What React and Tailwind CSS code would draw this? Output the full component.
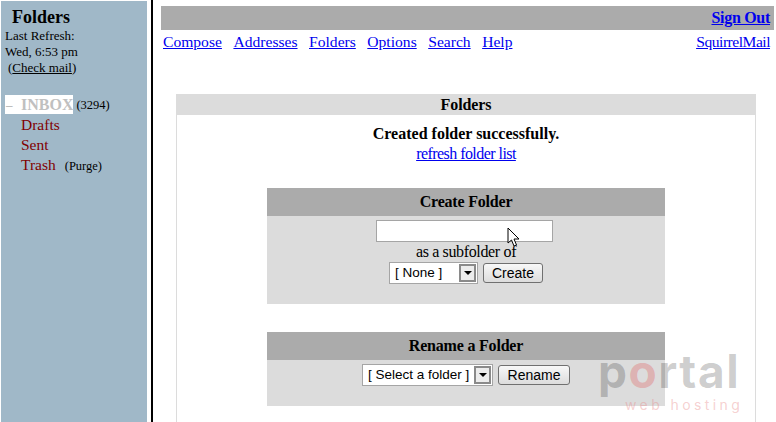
import React from 'react';

const serif = { fontFamily: '"Liberation Serif", serif' };

function Select({ label, width }) {
    return (
        <div className={`flex items-center justify-between h-[22px] bg-white border border-[#a5a5a5] pl-[5px] pr-[1px] text-[13.5px] text-black font-['Liberation_Sans',sans-serif] ${width}`}>
            <span className="whitespace-nowrap">{label}</span>
            <span className="flex items-center justify-center w-[17px] h-[18px] border-2 border-[#8a8a8a] bg-[#ececec]">
                <span className="w-0 h-0 border-l-[4px] border-r-[4px] border-t-[4px] border-l-transparent border-r-transparent border-t-black" />
            </span>
        </div>
    );
}

function Button({ children, width }) {
    return (
        <button className={`h-[20px] rounded-[3px] border border-[#707070] bg-gradient-to-b from-[#f8f8f8] to-[#dcdcdc] text-[14px] leading-none text-black font-['Liberation_Sans',sans-serif] ${width}`}>
            {children}
        </button>
    );
}

function Cursor() {
    return (
        <svg className="absolute left-[507px] top-[227px]" width="14" height="21" viewBox="0 0 14 21">
            <path d="M1 1 L1 16 L4.5 13 L7 19 L9.5 18 L7 12 L12 12 Z" fill="#ffffff" stroke="#000000" strokeWidth="1" />
        </svg>
    );
}

export default function App() {
    return (
        <div className="relative w-[776px] h-[422px] overflow-hidden bg-white flex text-black" style={serif}>
            <aside className="ml-[1px] mt-[1px] w-[146px] h-[421px] shrink-0 bg-[#a0b8c8]">
                <div className="pl-[11px] pt-[6px] text-[18px] leading-[20px] font-bold">Folders</div>
                <div className="pl-[4px] pt-[1px] text-[13px] leading-[16px]">
                    <div>Last Refresh:</div>
                    <div>Wed, 6:53 pm</div>
                    <div className="pl-[3px]">(<span className="underline">Check mail</span>)</div>
                </div>
                <div className="mt-[19px] text-[15.5px] leading-[20px] text-[#800000]">
                    <div className="flex items-center h-[19px] pl-[4px]">
                        <span className="flex items-center w-[16px] h-[19px] bg-white text-[#a0a0a0] text-[13px] pl-[1px]">–</span>
                        <span className="bg-white h-[19px] font-bold text-[16px] text-[#c0c0c0] leading-[19px]">INBOX</span>
                        <span className="ml-[3px] text-[12.5px] text-black">(3294)</span>
                    </div>
                    <div className="pl-[20px] mt-[1px]">Drafts</div>
                    <div className="pl-[20px]">Sent</div>
                    <div className="pl-[20px]">Trash<span className="ml-[9px] text-[12.5px] text-black">(Purge)</span></div>
                </div>
            </aside>
            <div className="ml-[4px] w-[2px] h-full shrink-0 bg-black" />
            <main className="flex-1 pl-[8px] pr-[2px] pt-[6px] min-w-0">
                <div className="h-[24px] bg-[#ababab] text-right pr-[4px] text-[16px] leading-[23px] font-bold tracking-[-0.3px]">
                    <a className="underline text-[#0000ee]">Sign Out</a>
                </div>
                <div className="flex justify-between pl-[2px] pr-[4px] text-[15.6px] leading-[24px] text-[#0000ee] underline">
                    <div className="flex gap-[11.5px]">
                        <a>Compose</a>
                        <a>Addresses</a>
                        <a>Folders</a>
                        <a>Options</a>
                        <a>Search</a>
                        <a>Help</a>
                    </div>
                    <a className="tracking-[-0.5px]">SquirrelMail</a>
                </div>
                <section className="ml-[15px] mr-[15px] mt-[40px] w-[580px] h-[400px] border-x border-[#dcdcdc] text-center">
                    <div className="h-[21px] -mx-[1px] bg-[#dcdcdc] font-bold text-[16px] tracking-[-0.1px] leading-[21px]">Folders</div>
                    <div className="pt-[9px] font-bold text-[16px] leading-[20px]">Created folder successfully.</div>
                    <div className="text-[16px] leading-[20px] text-[#0000ee] underline tracking-[-0.55px]">refresh folder list</div>
                    <div className="mx-[90px] mt-[24px] w-[398px]">
                        <div className="h-[28px] bg-[#ababab] font-bold text-[16px] tracking-[-0.2px] leading-[27px]">Create Folder</div>
                        <div className="h-[88px] bg-[#dcdcdc] flex flex-col items-center pt-[4px]">
                            <input className="w-[177px] h-[22px] mr-[4px] bg-white border border-[#a5a5a5] outline-none" />
                            <div className="text-[16px] tracking-[-0.35px] leading-[21px] -mt-[1px]">as a subfolder of</div>
                            <div className="flex items-center gap-[5px]">
                                <Select label="[ None ]" width="w-[89px]" />
                                <Button width="w-[60px]">Create</Button>
                            </div>
                        </div>
                    </div>
                    <div className="mx-[90px] mt-[28px] w-[398px]">
                        <div className="h-[28px] bg-[#ababab] font-bold text-[16px] tracking-[-0.2px] leading-[27px]">Rename a Folder</div>
                        <div className="h-[46px] bg-[#dcdcdc] flex justify-center items-start pt-[4px]">
                            <div className="flex items-center gap-[5px]">
                                <Select label="[ Select a folder ]" width="w-[131px]" />
                                <Button width="w-[72px]">Rename</Button>
                            </div>
                        </div>
                    </div>
                </section>
            </main>
            <Cursor />
            <div className="absolute left-[598px] top-[348px] w-[150px] pointer-events-none font-['Inter',sans-serif]">
                <div className="text-[46px] leading-[46px] font-bold tracking-[1.5px] whitespace-nowrap text-black/20">p<span className="text-[#e07070]/40">o</span>rtal</div>
                <div className="mt-[4px] text-[14px] leading-[14px] pl-[27px] tracking-[3.4px] whitespace-nowrap text-[#e88888]/40">web hosting</div>
            </div>
        </div>
    );
}
